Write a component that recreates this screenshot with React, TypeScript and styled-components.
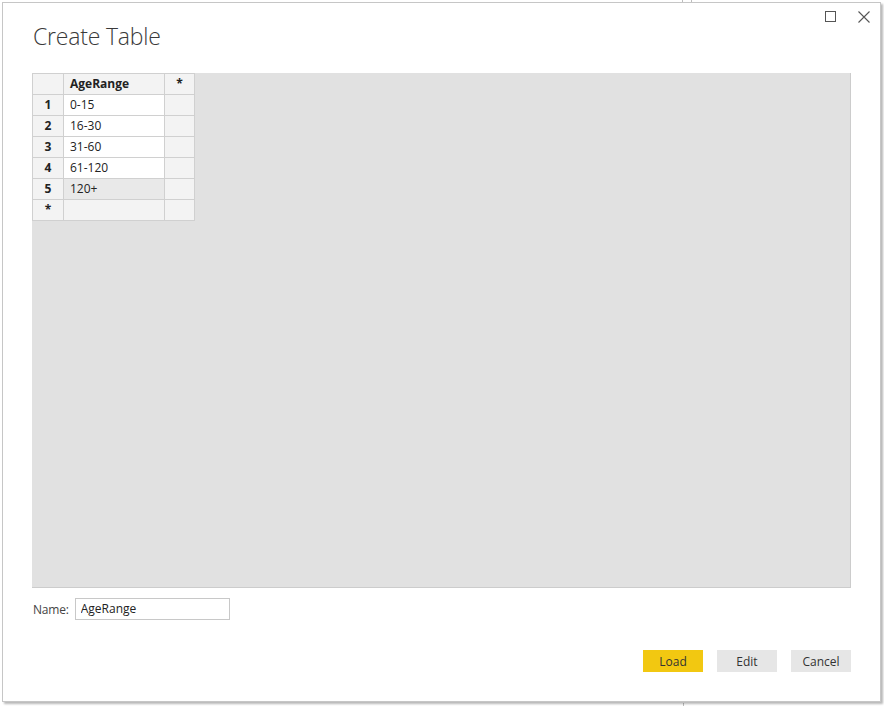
import React from 'react'
import styled, { createGlobalStyle } from 'styled-components'

const GlobalStyle = createGlobalStyle`
  html, body {
    margin: 0;
    padding: 0;
    background: #ffffff;
    font-family: 'Open Sans', 'Noto Sans', sans-serif;
  }
`

const Page = styled.div`
  position: relative;
  width: 884px;
  height: 706px;
  padding: 2px 0 0 2px;
  box-sizing: border-box;
  overflow: hidden;
`

const BackTick = styled.div<{ left: number; top: number }>`
  position: absolute;
  left: ${(p) => p.left}px;
  top: ${(p) => p.top}px;
  width: 1px;
  height: 3px;
  background: #bdbdbd;
`

const Dialog = styled.div`
  position: relative;
  width: 879px;
  height: 700px;
  box-sizing: border-box;
  border: 1px solid #c6c6c6;
  background: #ffffff;
  box-shadow: 2px 2px 2px rgba(0, 0, 0, 0.28);
  display: flex;
  flex-direction: column;
  padding: 0 29px 0 29px;
`

const Controls = styled.div`
  display: flex;
  justify-content: flex-end;
  align-items: center;
  gap: 22px;
  height: 22px;
  margin-right: -19px;
  padding-top: 5px;
  box-sizing: border-box;
`

const IconButton = styled.div`
  width: 12px;
  height: 12px;
  display: flex;
  align-items: center;
  justify-content: center;
`

const Title = styled.h1`
  margin: -4px 0 0 1px;
  font-weight: 300;
  font-size: 23px;
  line-height: 30px;
  color: #3a3a3a;
  letter-spacing: -0.2px;
`

const GridArea = styled.div`
  margin-top: 22px;
  height: 515px;
  box-sizing: border-box;
  border: 1px solid #cccccc;
  border-top: none;
  border-left: none;
  background: #e1e1e1;
  display: flex;
  align-items: flex-start;
`

const Table = styled.div`
  display: grid;
  grid-template-columns: 31px 101px 30px;
  grid-auto-rows: 21px;
  border-left: 1px solid #d0d0d0;
  border-top: 1px solid #d0d0d0;
`

type Kind = 'head' | 'rowhead' | 'cell' | 'selected' | 'star'

const bgFor: Record<Kind, string> = {
  head: '#f3f3f3',
  rowhead: '#f3f3f3',
  cell: '#ffffff',
  selected: '#e9e9e9',
  star: '#f3f3f3',
}

const Cell = styled.div<{ kind: Kind; center?: boolean }>`
  box-sizing: border-box;
  border-right: 1px solid #d0d0d0;
  border-bottom: 1px solid #d0d0d0;
  background: ${(p) => bgFor[p.kind]};
  font-size: 12px;
  line-height: 20px;
  color: #222222;
  font-weight: ${(p) => (p.kind === 'head' || p.kind === 'rowhead' ? 700 : 400)};
  text-align: ${(p) => (p.center ? 'center' : 'left')};
  padding-left: ${(p) => (p.center ? 0 : 6)}px;
  white-space: nowrap;
`

const NameRow = styled.div`
  display: flex;
  align-items: center;
  gap: 6px;
  margin-top: 10px;
  padding-left: 1px;
`

const Label = styled.span`
  font-size: 12px;
  color: #444444;
  letter-spacing: -0.2px;
`

const NameInput = styled.input`
  width: 155px;
  height: 22px;
  box-sizing: border-box;
  border: 1px solid #c8c8c8;
  padding: 0 5px 1px;
  font-family: 'Open Sans', 'Noto Sans', sans-serif;
  font-size: 12px;
  color: #222222;
  outline: none;
`

const Footer = styled.div`
  display: flex;
  justify-content: flex-end;
  gap: 14px;
  margin-top: 30px;
`

const Button = styled.button<{ primary?: boolean }>`
  width: 60px;
  height: 22px;
  border: none;
  padding: 0;
  background: ${(p) => (p.primary ? '#f2c811' : '#e6e6e6')};
  font-family: 'Open Sans', 'Noto Sans', sans-serif;
  font-size: 12px;
  color: #333333;
`

const rows = ['0-15', '16-30', '31-60', '61-120', '120+']

export default function App() {
  return (
    <>
      <GlobalStyle />
      <Page>
        <BackTick left={682} top={0} />
        <BackTick left={691} top={0} />
        <BackTick left={683} top={703} />
        <Dialog>
          <Controls>
            <IconButton>
              <svg width="11" height="11" viewBox="0 0 11 11">
                <rect x="0.5" y="0.5" width="10" height="10" fill="none" stroke="#555" strokeWidth="1" />
              </svg>
            </IconButton>
            <IconButton>
              <svg width="12" height="12" viewBox="0 0 12 12">
                <path d="M0.5 0.5 L11.5 11.5 M11.5 0.5 L0.5 11.5" stroke="#555" strokeWidth="1.1" />
              </svg>
            </IconButton>
          </Controls>
          <Title>Create Table</Title>
          <GridArea>
            <Table>
              <Cell kind="head" />
              <Cell kind="head">AgeRange</Cell>
              <Cell kind="head" center>*</Cell>
              {rows.map((r, i) => (
                <React.Fragment key={r}>
                  <Cell kind="rowhead" center>{i + 1}</Cell>
                  <Cell kind={i === 4 ? 'selected' : 'cell'}>{r}</Cell>
                  <Cell kind="star" />
                </React.Fragment>
              ))}
              <Cell kind="rowhead" center>*</Cell>
              <Cell kind="star" />
              <Cell kind="star" />
            </Table>
          </GridArea>
          <NameRow>
            <Label>Name:</Label>
            <NameInput defaultValue="AgeRange" />
          </NameRow>
          <Footer>
            <Button primary>Load</Button>
            <Button>Edit</Button>
            <Button>Cancel</Button>
          </Footer>
        </Dialog>
      </Page>
    </>
  )
}
